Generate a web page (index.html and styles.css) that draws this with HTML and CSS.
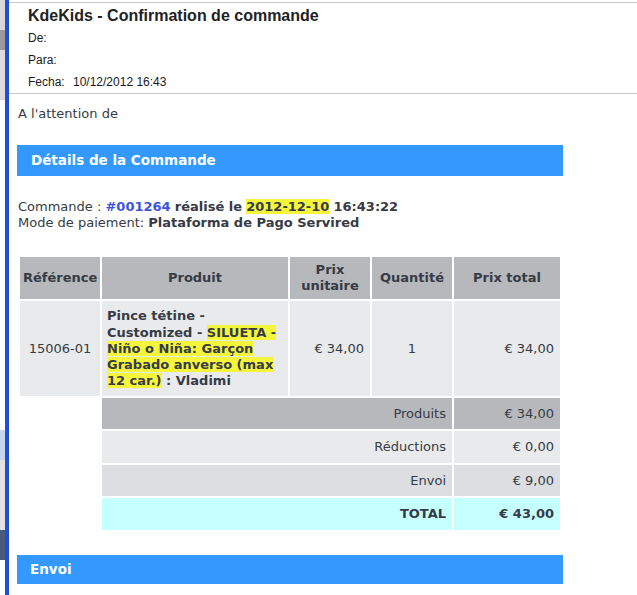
FILE: index.html
```html
<!DOCTYPE html>
<html>
<head>
<meta charset="utf-8">
<link rel="stylesheet" href="styles.css">
</head>
<body>
<div class="window">
  <div class="side"><div class="side-strip"></div><div class="side-bar"></div></div>
  <div class="main">
    <div class="mail-head">
      <div class="title">KdeKids - Confirmation de commande</div>
      <div class="hrow"><span class="hlabel">De:</span></div>
      <div class="hrow"><span class="hlabel">Para:</span></div>
      <div class="hrow"><span class="hlabel">Fecha:</span><span>10/12/2012 16:43</span></div>
    </div>
    <div class="content">
      <p class="attn">A l'attention de</p>
      <div class="section-bar">Détails de la Commande</div>
      <div class="order-info">
        <div>Commande : <b class="link">#001264</b> <b>réalisé le</b> <b class="hl">2012-12-10</b> <b>16:43:22</b></div>
        <div>Mode de paiement: <b>Plataforma de Pago Servired</b></div>
      </div>
      <table class="order">
        <thead>
          <tr class="head">
            <th class="c-ref">Référence</th>
            <th class="c-prod">Produit</th>
            <th class="c-unit">Prix<br>unitaire</th>
            <th class="c-qty">Quantité</th>
            <th class="c-total">Prix total</th>
          </tr>
        </thead>
        <tbody>
          <tr class="item">
            <td class="ref">15006-01</td>
            <td class="prod"><b>Pince tétine -<br>Customized - <span class="hl">SILUETA -<br>Niño o Niña: Garçon<br>Grabado anverso (max<br>12 car.)</span> : Vladimi</b></td>
            <td class="num">€ 34,00</td>
            <td class="qty">1</td>
            <td class="num">€ 34,00</td>
          </tr>
          <tr class="sum s1">
            <td class="blank"></td>
            <td class="lbl" colspan="3">Produits</td>
            <td class="num">€ 34,00</td>
          </tr>
          <tr class="sum s2">
            <td class="blank"></td>
            <td class="lbl" colspan="3">Réductions</td>
            <td class="num">€ 0,00</td>
          </tr>
          <tr class="sum s3">
            <td class="blank"></td>
            <td class="lbl" colspan="3">Envoi</td>
            <td class="num">€ 9,00</td>
          </tr>
          <tr class="sum s4">
            <td class="blank"></td>
            <td class="lbl" colspan="3"><b>TOTAL</b></td>
            <td class="num"><b>€ 43,00</b></td>
          </tr>
        </tbody>
      </table>
      <div class="section-bar envoi">Envoi</div>
    </div>
  </div>
</div>
</body>
</html>
```

FILE: styles.css
```css
html, body {
  margin: 0;
  padding: 0;
  background: #ffffff;
}
.window {
  display: flex;
  width: 637px;
  height: 595px;
  overflow: hidden;
}
.side {
  display: flex;
  flex: 0 0 9px;
}
.side-strip {
  width: 5px;
  background: linear-gradient(#d8d8d8 0 30px, #9a9a9a 30px 50px, #dcdcdc 50px 100px, #ffffff 100px 430px, #c8d4ec 430px 460px, #e0e0e0 460px 530px, #4a5a78 530px 560px, #ffffff 560px);
}
.side-bar {
  width: 4px;
  background: #1f4fd9;
}
.main {
  flex: 1;
  min-width: 0;
}
.mail-head {
  margin-top: 2px;
  border-top: 1px solid #c4c4c4;
  border-bottom: 1px solid #c4c4c4;
  padding: 1px 0 0 19px;
  height: 89px;
  font-family: "Liberation Sans", Arial, sans-serif;
  color: #1a1a1a;
}
.title {
  font-size: 16px;
  font-weight: bold;
  line-height: 23px;
  color: #222;
}
.hrow {
  font-size: 12px;
  line-height: 22px;
}
.hlabel {
  display: inline-block;
  width: 45px;
}
.content {
  padding: 0 8px;
  font-family: "DejaVu Sans", Verdana, sans-serif;
  font-size: 13px;
  line-height: 16px;
  color: #363b45;
}
.attn {
  margin: 12px 0 0 1px;
}
.section-bar {
  margin-top: 23px;
  width: 546px;
  height: 31px;
  line-height: 31px;
  background: #3399ff;
  color: #ffffff;
  font-weight: bold;
  font-size: 13.5px;
  padding-left: 14px;
  box-sizing: border-box;
}
.section-bar.envoi {
  margin-top: 23px;
  height: 29px;
  line-height: 29px;
  padding-left: 13px;
}
.order-info {
  margin-top: 23px;
  padding-left: 1px;
}
.link {
  color: #3a56dd;
}
.hl {
  background: #f5f53c;
}
.order {
  margin-top: 24px;
  margin-left: 1px;
  border-collapse: separate;
  border-spacing: 2px;
  table-layout: fixed;
  width: 544px;
  font-size: 13px;
  line-height: 16px;
  color: #363b45;
}
.order th {
  background: #b7b8bc;
  height: 42px;
  padding: 0 3px;
  box-sizing: border-box;
  font-weight: bold;
  text-align: center;
  vertical-align: middle;
}
.c-ref { width: 80px; }
.c-prod { width: 186px; }
.c-unit { width: 80px; }
.c-qty { width: 80px; }
.c-total { width: 106px; }
.order td {
  padding: 0 6px;
  vertical-align: middle;
  box-sizing: border-box;
}
.item td {
  background: #e9eaec;
  height: 95px;
}
.item .ref {
  text-align: center;
}
.item .prod {
  white-space: nowrap;
  padding: 1px 0 0 5px;
  line-height: 16.25px;
}
.item .qty {
  text-align: center;
}
.num {
  text-align: right;
}
.lbl {
  text-align: right;
}
.order td.blank {
  background: transparent;
}
.s1 td { background: #b7b8bc; height: 31px; }
.s2 td { background: #e9eaec; height: 32px; }
.s3 td { background: #dcdee1; height: 31px; }
.s4 td { background: #c6ffff; height: 32px; }
```
